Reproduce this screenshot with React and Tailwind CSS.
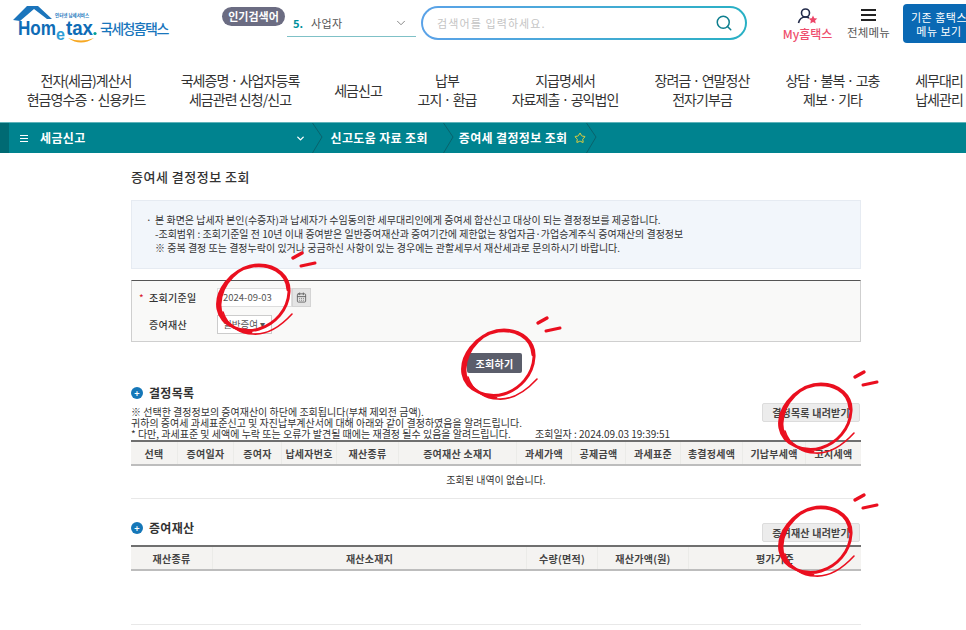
import { Search, ChevronDown, Star, CalendarDays } from "lucide-react";

const font = { fontFamily: '"Noto Sans CJK KR", "Noto Sans", sans-serif' };

const navItems = [
  { w: "w-[154px]", lines: ["전자(세금)계산서", "현금영수증 · 신용카드"] },
  { w: "w-[154px]", lines: ["국세증명 · 사업자등록", "세금관련 신청/신고"] },
  { w: "w-[82px]", lines: ["세금신고"] },
  { w: "w-[96px]", lines: ["납부", "고지 · 환급"] },
  { w: "w-[140px]", lines: ["지급명세서", "자료제출 · 공익법인"] },
  { w: "w-[134px]", lines: ["장려금 · 연말정산", "전자기부금"] },
  { w: "w-[127px]", lines: ["상담 · 불복 · 고충", "제보 · 기타"] },
  { w: "w-[86px]", lines: ["세무대리", "납세관리"] },
];

const listCols = ["선택", "증여일자", "증여자", "납세자번호", "재산종류", "증여재산 소재지", "과세가액", "공제금액", "과세표준", "총결정세액", "기납부세액", "고지세액"];
const assetCols = ["재산종류", "재산소재지", "수량(면적)", "재산가액(원)", "평가기준"];

function Logo() {
  return (
    <svg width="162" height="44" viewBox="0 0 162 44" className="shrink-0">
      <path d="M2 15 L16 1 L27 1 L41 14 L36 14 L23 4 L9 16 Z" fill="#1b75bc" />
      <text x="44" y="12" fontSize="4.5" fill="#1b75bc" fontWeight="700">인터넷 납세서비스</text>
      <text x="7" y="30" fontSize="21" fontWeight="700" fill="#0f6cb6" textLength="38" lengthAdjust="spacingAndGlyphs" fontFamily="Liberation Sans">Hom</text>
      <text x="45" y="35" fontSize="16" fontWeight="700" fill="#2e9ed6" fontFamily="Liberation Sans">e</text>
      <text x="55" y="30" fontSize="21" fontWeight="700" fill="#0f6cb6" textLength="27" lengthAdjust="spacingAndGlyphs" fontFamily="Liberation Sans">tax</text>
      <circle cx="84" cy="28.5" r="1.6" fill="#00a19a" />
      <path d="M57 33 Q70 42 83 33 Q70 38 57 33 Z" fill="#f7a823" />
      <text x="89" y="28.5" fontSize="14" fontWeight="500" fill="#1976bc" letterSpacing="-1.6">국세청홈택스</text>
    </svg>
  );
}

function UserStarIcon() {
  return (
    <svg width="22" height="18" viewBox="0 0 22 18">
      <circle cx="8.5" cy="6" r="4" fill="none" stroke="#232b4a" strokeWidth="1.6" />
      <path d="M1.5 16 C2.5 11.5 5 10 8.5 10 C10 10 11 10.3 12 11" fill="none" stroke="#232b4a" strokeWidth="1.6" />
      <path d="M16 8.5 L17.3 11.2 L20.3 11.6 L18.1 13.6 L18.7 16.6 L16 15.1 L13.3 16.6 L13.9 13.6 L11.7 11.6 L14.7 11.2 Z" fill="#ec4668" />
    </svg>
  );
}

function Crumb({ children, className = "" }) {
  return <span className={`shrink-0 text-[12px] font-bold text-white tracking-[0.35px] whitespace-nowrap ${className}`}>{children}</span>;
}

function CrumbSep() {
  return (
    <svg width="11" height="30" viewBox="0 0 11 30" className="shrink-0">
      <path d="M0.5 0 L10 14 L0.5 30" fill="none" stroke="#0a5f68" strokeWidth="0.9" />
    </svg>
  );
}

// red pen circle drawn over the capture
function HandCircle({ className }) {
  return (
    <svg width="105" height="88" viewBox="0 0 105 88" className={`absolute pointer-events-none ${className}`}>
      <g fill="none" stroke="#ea0f1f" strokeLinecap="round">
        <path strokeWidth="3" d="M73 40 C72 21 54 14 38 16 C15 20 0 42 3 59 C6 76 28 84 44 79 C60 74 73 60 74 42 C75 27 62 15 44 15 C24 15 6 33 5 54 C4 70 19 81 36 82" />
        <path strokeWidth="1.6" d="M8 62 C12 76 26 84 38 84 C52 85 66 76 77 64" />
        <path strokeWidth="3.4" d="M78 8 L87 3" />
        <path strokeWidth="3" d="M86 16 L100 13" />
      </g>
    </svg>
  );
}

function TableHead({ cols, template }) {
  return (
    <div className={`grid ${template} h-[26px] border-t-2 border-b-2 border-t-[#6f6f6f] border-b-[#bdbdbd] bg-[#f4f3f1]`}>
      {cols.map((c, i) => (
        <div key={c} className={`flex items-center justify-center text-[10px] font-bold text-[#444] tracking-[0.25px] whitespace-nowrap ${i > 0 ? "border-l border-[#ebebe8]" : ""}`}>
          {c}
        </div>
      ))}
    </div>
  );
}

function SectionTitle({ children }) {
  return (
    <div className="flex items-center gap-[6px] h-[16px]">
      <span className="w-[12px] h-[12px] rounded-full bg-[#1577b8] flex items-center justify-center text-white text-[9px] leading-none font-bold">+</span>
      <span className="text-[12px] font-bold text-[#333] tracking-[0.3px]">{children}</span>
    </div>
  );
}

function DownloadBtn({ children }) {
  return (
    <button type="button" className="w-[98px] h-[19px] shrink-0 bg-[#ececec] border border-[#dcdcdc] rounded-[2px] text-[10px] font-bold text-[#444] tracking-[0.2px] whitespace-nowrap">
      {children}
    </button>
  );
}

export default function App() {
  return (
    <div style={font} className="relative w-[966px] h-[630px] overflow-hidden bg-white">
      {/* top bar */}
      <div className="flex items-start h-[64px] pl-[11px] pt-[5px]">
        <Logo />
        <div className="shrink-0 ml-[49px] mt-[2px] h-[19px] w-[63px] rounded-full bg-[#6b6c82] text-white text-[11px] font-bold flex items-center justify-center">인기검색어</div>
        <div className="shrink-0 ml-[2px] mt-[5px] w-[129px] h-[27px] border-b border-[#7fc1c7] flex items-center pl-[6px] pr-[8px] text-[11px] text-[#555]">
          <span className="font-bold text-[#00919c] mr-[8px]">5.</span>
          <span className="tracking-[0.4px]">사업자</span>
          <ChevronDown className="ml-auto text-[#777]" size={14} strokeWidth={1.5} />
        </div>
        <div className="shrink-0 ml-[5px] mt-[1px] w-[326px] h-[34px] rounded-full p-[2px] bg-gradient-to-r from-[#5aa2e8] to-[#27b0c4]">
          <div className="w-full h-full rounded-full bg-white flex items-center pl-[14px] pr-[12px]">
            <span className="text-[11px] text-[#c4c4c4] tracking-[1.1px]">검색어를 입력하세요.</span>
            <Search className="ml-auto text-[#0e7f8f]" size={18} strokeWidth={2} />
          </div>
        </div>
        <div className="shrink-0 ml-[35px] mt-[2px] w-[51px] flex flex-col items-center">
          <UserStarIcon />
          <span className="text-[12px] font-medium text-[#ee4d6c] leading-[16px] whitespace-nowrap mt-[1px]">My홈택스</span>
        </div>
        <div className="shrink-0 ml-[13px] mt-[4px] w-[45px] flex flex-col items-center">
          <div className="w-[15px] h-[12px] border-y-2 border-[#222] flex items-center">
            <div className="w-full h-[2px] bg-[#222]" />
          </div>
          <span className="text-[11.5px] tracking-[0.2px] text-[#555] leading-[16px] whitespace-nowrap mt-[3px]">전체메뉴</span>
        </div>
        <div className="shrink-0 ml-[12px] -mt-[1px] w-[72px] h-[39px] rounded-[4px] bg-[#0a69b4] text-white text-[11px] leading-[14px] tracking-[0.5px] flex flex-col items-center justify-center whitespace-nowrap">
          <span>기존 홈택스</span>
          <span>메뉴 보기</span>
        </div>
      </div>

      {/* main nav */}
      <div className="flex items-center h-[58px] pl-[9px] pb-[6px] whitespace-nowrap">
        {navItems.map((item) => (
          <div key={item.lines[0]} className={`${item.w} shrink-0 text-center text-[14px] leading-[19px] tracking-[-0.95px] text-[#333]`}>
            {item.lines.map((l) => (
              <div key={l}>{l}</div>
            ))}
          </div>
        ))}
      </div>

      {/* breadcrumb */}
      <div className="flex items-center h-[31px] bg-[#00838f] border-t border-[#5fb3ba]">
        <div className="w-[9px] h-full bg-[#006a73]" />
        <div className="ml-[11px] w-[8px] h-[7px] border-y border-white flex items-center">
          <div className="w-full h-px bg-white" />
        </div>
        <Crumb className="ml-[12px]">세금신고</Crumb>
        <ChevronDown className="ml-[209px] text-white" size={11} strokeWidth={3} />
        <div className="ml-[6px] flex"><CrumbSep /></div>
        <Crumb className="ml-[8px]">신고도움 자료 조회</Crumb>
        <div className="ml-[15px] flex"><CrumbSep /></div>
        <Crumb className="ml-[5px]">증여세 결정정보 조회</Crumb>
        <Star className="ml-[6px] text-[#e8d23c]" size={12} strokeWidth={2} />
        <div className="flex"><CrumbSep /></div>
      </div>

      {/* content */}
      <div className="ml-[131px] w-[730px]">
        <h1 className="mt-[15px] h-[18px] text-[13px] leading-[18px] font-medium text-[#333] tracking-[0.5px]">증여세 결정정보 조회</h1>

        <div className="mt-[14px] h-[69px] bg-[#f2f6fb] border border-[#e6ebf2] pt-[12px] pl-[14px] text-[10px] leading-[14px] text-[#333] whitespace-nowrap">
          <p className="flex"><span className="w-[9px] shrink-0">·</span>본 화면은 납세자 본인(수증자)과 납세자가 수임동의한 세무대리인에게 증여세 합산신고 대상이 되는 결정정보를 제공합니다.</p>
          <p className="pl-[9px]">-조회범위 : 조회기준일 전 10년 이내 증여받은 일반증여재산과 증여기간에 제한없는 창업자금·가업승계주식 증여재산의 결정정보</p>
          <p className="pl-[9px]">※ 중복 결정 또는 결정누락이 있거나 궁금하신 사항이 있는 경우에는 관할세무서 재산세과로 문의하시기 바랍니다.</p>
        </div>

        <div className="mt-[11px] h-[62px] border border-[#cfcfcf] border-t-[#555] bg-[#f9f9f8] pl-[7px] pt-[7px]">
          <div className="flex items-center h-[19px]">
            <span className="w-[10px] text-[10px] text-[#d8121f] leading-none">*</span>
            <span className="w-[68px] text-[10px] font-medium text-[#333] tracking-[0.3px]">조회기준일</span>
            <div className="w-[75px] h-[19px] bg-white border border-[#ddd] flex items-center pl-[5px] text-[9.5px] text-[#555]">2024-09-03</div>
            <div className="w-[19px] h-[19px] bg-[#e4e4e4] border border-[#d4d4d4] flex items-center justify-center">
              <CalendarDays size={11} className="text-[#666]" strokeWidth={2} />
            </div>
          </div>
          <div className="flex items-center h-[19px] mt-[8px]">
            <span className="w-[78px] pl-[10px] text-[10px] font-medium text-[#333] tracking-[0.3px]">증여재산</span>
            <div className="w-[55px] h-[19px] bg-white border border-[#ccc] flex items-center pl-[5px] text-[9.5px] text-[#555] whitespace-nowrap">일반증여 ▾</div>
          </div>
        </div>

        <div className="mt-[11px] flex justify-center pr-[3px]">
          <button type="button" className="w-[55px] h-[20px] rounded-[2px] bg-[#5b5e6b] text-white text-[10px] font-bold tracking-[0.3px]">조회하기</button>
        </div>

        {/* decided list */}
        <div className="flex items-start h-[55px] mt-[12px]">
          <div className="w-[631px] shrink-0">
            <SectionTitle>결정목록</SectionTitle>
            <div className="mt-[5px] text-[10px] leading-[11px] text-[#333] whitespace-nowrap">
              <p>※ 선택한 결정정보의 증여재산이 하단에 조회됩니다(부채 제외전 금액).</p>
              <p>귀하의 증여세 과세표준신고 및 자진납부계산서에 대해 아래와 같이 결정하였음을 알려드립니다.</p>
              <p>* 다만, 과세표준 및 세액에 누락 또는 오류가 발견될 때에는 재결정 될수 있음을 알려드립니다. <span className="ml-[22px]">조회일자 : 2024.09.03 19:39:51</span></p>
            </div>
          </div>
          <div className="mt-[18px] flex"><DownloadBtn>결정목록 내려받기</DownloadBtn></div>
        </div>
        <TableHead cols={listCols} template="grid-cols-[46px_56px_48px_55px_62px_118px_55px_54px_55px_62px_63px_56px]" />
        <div className="h-[33px] border-b border-[#e8e8e8] flex items-center justify-center text-[10px] text-[#333] pb-[5px]">조회된 내역이 없습니다.</div>

        {/* gift property */}
        <div className="flex items-start h-[24px] mt-[22px]">
          <div className="w-[631px] shrink-0 -mt-[1px]"><SectionTitle>증여재산</SectionTitle></div>
          <div className="mt-[2px] flex"><DownloadBtn>증여재산 내려받기</DownloadBtn></div>
        </div>
        <TableHead cols={assetCols} template="grid-cols-[81px_314px_71px_91px_173px]" />
        <div className="mt-[53px] border-t border-[#e8e8e8]" />
      </div>

      <HandCircle className="left-[215px] top-[250px]" />
      <HandCircle className="left-[460px] top-[315px]" />
      <HandCircle className="left-[777px] top-[369px]" />
      <HandCircle className="left-[777px] top-[492px]" />
    </div>
  );
}
